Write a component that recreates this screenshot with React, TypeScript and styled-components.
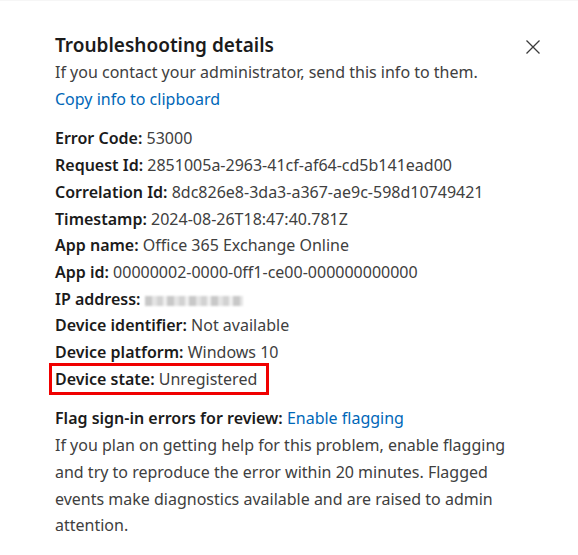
import React from "react";
import styled, { createGlobalStyle } from "styled-components";

const Global = createGlobalStyle`
  html, body { margin: 0; padding: 0; background: #ffffff; }
  body { font-family: "Noto Sans", "Open Sans", sans-serif; }
`;

const Page = styled.div`
  width: 578px;
  height: 555px;
  box-sizing: border-box;
  position: relative;
  overflow: hidden;
  background: #fff;
  border-top: 1px solid #f6f6f6;
  padding: 31px 0 0 55px;
`;

const Header = styled.div`
  display: flex;
  justify-content: space-between;
  align-items: flex-start;
  padding-right: 36px;
`;

const Title = styled.h2`
  margin: 0;
  font-size: 19px;
  line-height: 27px;
  font-weight: 600;
  color: #1b1b1b;
`;

const CloseButton = styled.button`
  border: none;
  background: none;
  padding: 0;
  margin-top: 6px;
  width: 18px;
  height: 18px;
  display: flex;
  align-items: center;
  justify-content: center;
  cursor: pointer;
`;

const Text = styled.p`
  margin: 0;
  font-size: 16px;
  line-height: 26.7px;
  color: #404040;
`;

const Link = styled.a`
  color: #0067b8;
  text-decoration: none;
  font-size: 16px;
  line-height: 26.7px;
  cursor: pointer;
`;

const Details = styled.div`
  display: flex;
  flex-direction: column;
  margin-top: 13px;
`;

const Row = styled.div<{ $highlight?: boolean }>`
  font-size: 16px;
  line-height: 26.7px;
  color: #404040;
  align-self: flex-start;
  ${(p) =>
    p.$highlight
      ? `outline: 3px solid #f00000; outline-offset: 0px; margin-left: -3px; padding: 0 9px 0 3px;`
      : ""}
`;

const Label = styled.span`
  font-weight: 600;
  color: #1b1b1b;
`;

const Blur = styled.span`
  display: inline-block;
  width: 98px;
  height: 10px;
  vertical-align: -1px;
  background: repeating-linear-gradient(
    90deg,
    #c8c8c8 0 7px,
    #e4e4e4 7px 12px,
    #d2d2d2 12px 18px,
    #efefef 18px 22px
  );
  filter: blur(1px);
`;

const Flag = styled.div`
  margin-top: 13px;
  width: 468px;
`;

const rows: [string, React.ReactNode][] = [
  ["Error Code:", "53000"],
  ["Request Id:", "2851005a-2963-41cf-af64-cd5b141ead00"],
  ["Correlation Id:", "8dc826e8-3da3-a367-ae9c-598d10749421"],
  ["Timestamp:", "2024-08-26T18:47:40.781Z"],
  ["App name:", "Office 365 Exchange Online"],
  ["App id:", "00000002-0000-0ff1-ce00-000000000000"],
  ["IP address:", <Blur key="b" />],
  ["Device identifier:", "Not available"],
  ["Device platform:", "Windows 10"],
];

export default function App() {
  return (
    <Page>
      <Global />
      <Header>
        <Title>Troubleshooting details</Title>
        <CloseButton aria-label="Close">
          <svg width="16" height="16" viewBox="0 0 16 16">
            <path d="M1.5 1.5 L14.5 14.5 M14.5 1.5 L1.5 14.5" stroke="#3b3b3b" strokeWidth="1.3" fill="none" />
          </svg>
        </CloseButton>
      </Header>
      <Text>If you contact your administrator, send this info to them.</Text>
      <Link>Copy info to clipboard</Link>
      <Details>
        {rows.map(([l, v]) => (
          <Row key={l}>
            <Label>{l}</Label> {v}
          </Row>
        ))}
        <Row $highlight>
          <Label>Device state:</Label> Unregistered
        </Row>
      </Details>
      <Flag>
        <Row>
          <Label>Flag sign-in errors for review:</Label> <Link>Enable flagging</Link>
        </Row>
        <Text>
          If you plan on getting help for this problem, enable flagging and try to reproduce the error within 20
          minutes. Flagged events make diagnostics available and are raised to admin attention.
        </Text>
      </Flag>
    </Page>
  );
}
